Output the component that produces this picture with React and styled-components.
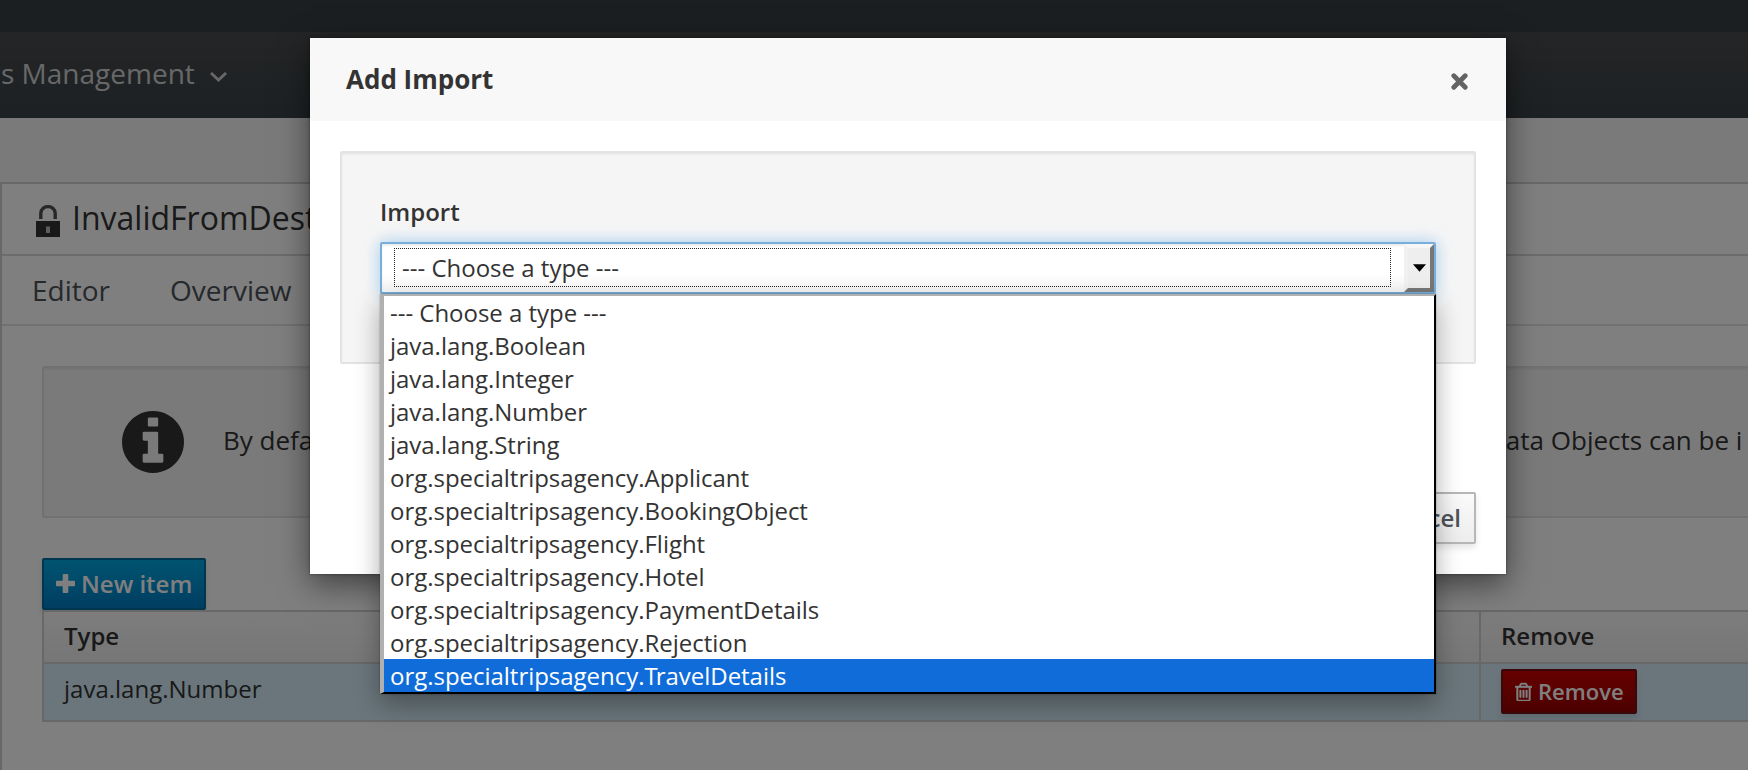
import React from 'react';
import styled, { createGlobalStyle, css } from 'styled-components';

const GlobalStyle = createGlobalStyle`
  *, *::before, *::after { box-sizing: border-box; }
  body {
    margin: 0;
    overflow: hidden;
    font-family: 'Open Sans', sans-serif;
    font-size: 24px;
    line-height: 33px;
    color: #333;
  }
`;

const Page = styled.div`
  position: relative;
  display: flex;
  flex-direction: column;
  width: 1748px;
  height: 770px;
  overflow: hidden;
  background: #f5f5f5;
`;

const TopBar = styled.div`
  flex: none;
  height: 32px;
  background: #363e44;
`;

const NavBar = styled.nav`
  flex: none;
  display: flex;
  align-items: center;
  height: 86px;
  padding-bottom: 3px;
  background: linear-gradient(#494b4d, #394247);
  color: #d1d1d1;
  font-size: 28px;
`;

const NavItem = styled.a`
  display: flex;
  align-items: center;
  gap: 15px;
  margin-left: 1px;
  white-space: nowrap;
  svg { margin-top: 6px; }
`;

const Panel = styled.main`
  flex: 1;
  margin-top: 64px;
  border: solid #d1d1d1;
  border-width: 2px 0 0 2px;
  background: #fff;
`;

const TitleBar = styled.header`
  display: flex;
  align-items: center;
  gap: 12px;
  height: 72px;
  padding: 0 0 3px 34px;
  border-bottom: 2px solid #d8d8d8;
  font-size: 32px;
  white-space: nowrap;
  svg { margin-top: 6px; }
`;

const Tabs = styled.div`
  display: flex;
  align-items: center;
  gap: 60px;
  height: 70px;
  padding-left: 30px;
  border-bottom: 2px solid #e2e2e2;
  color: #4d5258;
  font-size: 28px;
`;

const Content = styled.div`
  display: flex;
  flex-direction: column;
  align-items: flex-start;
  padding: 40px 0 0 40px;
`;

const InfoBox = styled.section`
  display: flex;
  align-items: center;
  width: 1800px;
  height: 152px;
  margin-bottom: 40px;
  padding-left: 78px;
  border: 2px solid #e3e3e3;
  border-radius: 2px;
  background: #f5f5f5;
  box-shadow: inset 0 2px 2px rgba(0, 0, 0, 0.05);
  font-size: 26px;
  white-space: nowrap;
  svg { flex: none; }
`;

const InfoText = styled.p`
  flex: none;
  width: 1240px;
  margin: 0 0 4px 39px;
  ${(p) => p.$tail && css`
    width: auto;
    margin-left: 24px;
  `}
`;

const tones = {
  primary: css`
    height: 52px;
    padding: 0 12px 2px;
    border-color: #006e9c;
    background: linear-gradient(#00a8e1, #007cc3);
    color: #fff;
  `,
  danger: css`
    height: 45px;
    padding: 0 11px 1px 12px;
    border-color: #731010;
    background: linear-gradient(#cc0000, #970000);
    color: #fff;
    font-size: 22px;
  `,
  plain: css`
    height: 52px;
    padding: 0 13px 2px;
    border-color: #b7b7b7;
    background: linear-gradient(#fafafa, #ededed);
    color: #4d5258;
  `,
};

const Button = styled.button`
  display: flex;
  align-items: center;
  gap: 6px;
  border: 2px solid;
  border-radius: 2px;
  box-shadow: 0 4px 6px rgba(3, 3, 3, 0.1);
  font: 600 24px 'Open Sans', sans-serif;
  white-space: nowrap;
  ${(p) => tones[p.$tone]}
`;

const Table = styled.div`
  display: grid;
  grid-template-columns: 1435px 400px;
  border: 2px solid #d1d1d1;
`;

const HeadCell = styled.div`
  display: flex;
  align-items: center;
  height: 52px;
  padding: 0 0 4px 20px;
  border-bottom: 2px solid #d1d1d1;
  background: linear-gradient(#fafafa, #ededed);
  font-weight: 600;
  & + & { border-left: 2px solid #d1d1d1; }
`;

const Cell = styled.div`
  display: flex;
  align-items: center;
  height: 56px;
  padding: 0 0 7px 20px;
  background: #d4ecf8;
  & + & {
    padding-bottom: 1px;
    border-left: 2px solid #d1d1d1;
  }
`;

const Backdrop = styled.div`
  position: absolute;
  inset: 0;
  background: rgba(0, 0, 0, 0.5);
`;

const Dialog = styled.div`
  display: flex;
  flex-direction: column;
  width: 1196px;
  height: 536px;
  margin: 38px 0 0 310px;
  background: #fff;
  box-shadow: 0 10px 30px rgba(0, 0, 0, 0.5), 0 0 3px rgba(0, 0, 0, 0.4);
`;

const DialogHeader = styled.header`
  display: flex;
  align-items: center;
  justify-content: space-between;
  height: 83px;
  padding: 0 38px 0 36px;
  background: #f8f8f8;
  svg { margin-top: 3px; }
`;

const DialogTitle = styled.h1`
  margin: 0;
  font-size: 26px;
  font-weight: 700;
`;

const Well = styled.div`
  height: 213px;
  margin: 30px 30px 0;
  padding: 42px 38px 0;
  border: 2px solid #e3e3e3;
  border-radius: 2px;
  background: #f5f5f5;
  box-shadow: inset 0 2px 2px rgba(0, 0, 0, 0.05);
`;

const Label = styled.label`
  display: block;
  height: 47px;
  font-weight: 600;
`;

const SelectBox = styled.div`
  position: relative;
  display: flex;
  justify-content: space-between;
  height: 52px;
  border: 2px solid #78aedc;
  border-radius: 2px;
  background: linear-gradient(#fff 60%, #f5f5f5);
  box-shadow: inset 0 2px 2px rgba(3, 3, 3, 0.08), 0 0 16px rgba(102, 175, 233, 0.6);
`;

const SelectValue = styled.div`
  width: 997px;
  height: 39px;
  margin: 4px 0 0 12px;
  padding-left: 7px;
  border: 1px dotted #222;
  line-height: 38px;
`;

const SelectArrow = styled.div`
  display: flex;
  align-items: center;
  justify-content: center;
  width: 30px;
  border: 4px solid;
  border-color: #f6f6f6 #777 #777 #f1f1f1;
  background: #eee;
`;

const Options = styled.ul`
  position: absolute;
  top: 50px;
  left: -2px;
  right: -2px;
  margin: 0;
  padding: 0;
  list-style: none;
  border: solid;
  border-width: 2px 2px 2px 4px;
  border-color: #b0b0b0 #000 #000 #b0b0b0;
  background: #fff;
  box-shadow: 0 10px 24px rgba(0, 0, 0, 0.32), 0 0 2px rgba(0, 0, 0, 0.3);
`;

const Option = styled.li`
  height: 33px;
  padding-left: 6px;
  line-height: 34px;
  letter-spacing: -0.025px;
  ${(p) => p.$active && css`
    background: #106cd9;
    color: #fff;
  `}
`;

const Kern = styled.span`
  letter-spacing: -2px;
`;

const DialogFooter = styled.footer`
  display: flex;
  justify-content: flex-end;
  margin-top: 128px;
  padding-right: 30px;
`;

const LockIcon = () => (
  <svg width="24" height="32" viewBox="0 0 24 32">
    <path d="M4.8 14V8.2a7.2 6.6 0 0 1 14.4 0V14" fill="none" stroke="#505050" strokeWidth="3.4" />
    <path d="M0 16h24v16H0z" fill="#333" />
    <path d="M10 21.5h4v6.5h-4z" fill="#bbb" />
  </svg>
);

const ChevronIcon = () => (
  <svg width="17" height="10" viewBox="0 0 17 10">
    <path d="M1 1l7.5 7 7.5-7" fill="none" stroke="#d1d1d1" strokeWidth="2.8" />
  </svg>
);

const CloseIcon = () => (
  <svg width="17" height="17" viewBox="0 0 17 17">
    <path d="M2.8 2.8l11.4 11.4M14.2 2.8L2.8 14.2" stroke="#636363" strokeWidth="4.8" strokeLinecap="round" />
  </svg>
);

const PlusIcon = () => (
  <svg width="19" height="19" viewBox="0 0 19 19">
    <path d="M7.5 0h4a.8.8 0 0 1 .8.8v5.9h5.9a.8.8 0 0 1 .8.8v4a.8.8 0 0 1-.8.8h-5.9v5.9a.8.8 0 0 1-.8.8h-4a.8.8 0 0 1-.8-.8v-5.9H.8a.8.8 0 0 1-.8-.8v-4a.8.8 0 0 1 .8-.8h5.900V.8a.8.8 0 0 1 .8-.8z" fill="#fff" />
  </svg>
);

const InfoIcon = () => (
  <svg width="62" height="62" viewBox="0 128 1536 1536" fill="#333">
    <path d="M1024 1376v-160q0-14-9-23t-23-9h-96v-512q0-14-9-23t-23-9h-320q-14 0-23 9t-9 23v160q0 14 9 23t23 9h96v320h-96q-14 0-23 9t-9 23v160q0 14 9 23t23 9h448q14 0 23-9t9-23zm-128-896v-160q0-14-9-23t-23-9h-192q-14 0-23 9t-9 23v160q0 14 9 23t23 9h192q14 0 23-9t9-23zm640 416q0 209-103 385.5t-279.5 279.5-385.5 103-385.5-103-279.5-279.5-103-385.5 103-385.5 279.5-279.5 385.5-103 385.5 103 279.5 279.5 103 385.5z" />
  </svg>
);

const TrashIcon = () => (
  <svg width="17" height="19" viewBox="0 128 1408 1536" fill="#fff" stroke="#fff" strokeWidth="36">
    <path d="M512 800v576q0 14-9 23t-23 9h-64q-14 0-23-9t-9-23v-576q0-14 9-23t23-9h64q14 0 23 9t9 23zm256 0v576q0 14-9 23t-23 9h-64q-14 0-23-9t-9-23v-576q0-14 9-23t23-9h64q14 0 23 9t9 23zm256 0v576q0 14-9 23t-23 9h-64q-14 0-23-9t-9-23v-576q0-14 9-23t23-9h64q14 0 23 9t9 23zm128 724v-948h-896v948q0 22 7 40.5t14.5 27 10.5 8.5h832q3 0 10.5-8.5t14.5-27 7-40.5zm-672-1076h448l-48-117q-7-9-17-11h-317q-10 2-17 11zm928 32v64q0 14-9 23t-23 9h-96v948q0 83-47 143.5t-113 60.5h-832q-66 0-113-58.5t-47-141.5v-952h-96q-14 0-23-9t-9-23v-64q0-14 9-23t23-9h309l70-167q15-37 54-63t79-26h320q40 0 79 26t54 63l70 167h309q14 0 23 9t9 23z" />
  </svg>
);

const ArrowIcon = () => (
  <svg width="13" height="8" viewBox="0 0 14 8">
    <path d="M0 0h14L7 8z" />
  </svg>
);

const types = [
  '--- Choose a type ---',
  'java.lang.Boolean',
  'java.lang.Integer',
  'java.lang.Number',
  'java.lang.String',
  'org.specialtripsagency.Applicant',
  'org.specialtripsagency.BookingObject',
  'org.specialtripsagency.Flight',
  'org.specialtripsagency.Hotel',
  'org.specialtripsagency.PaymentDetails',
  'org.specialtripsagency.Rejection',
  'org.specialtripsagency.TravelDetails',
];

const kerned = (name) => {
  const at = name.indexOf('Tr');
  return at < 0 ? name : <>{name.slice(0, at)}<Kern>T</Kern>{name.slice(at + 1)}</>;
};

export default function App() {
  const active = types.length - 1;
  return (
    <Page>
      <GlobalStyle />
      <TopBar />
      <NavBar>
        <NavItem>s Management<ChevronIcon /></NavItem>
      </NavBar>
      <Panel>
        <TitleBar><LockIcon />InvalidFromDest</TitleBar>
        <Tabs><span>Editor</span><span>Overview</span></Tabs>
        <Content>
          <InfoBox>
            <InfoIcon />
            <InfoText>By defa</InfoText>
            <InfoText $tail>Data Objects can be i</InfoText>
          </InfoBox>
          <Button $tone="primary"><PlusIcon />New item</Button>
          <Table>
            <HeadCell>Type</HeadCell>
            <HeadCell>Remove</HeadCell>
            <Cell>java.lang.Number</Cell>
            <Cell><Button $tone="danger"><TrashIcon />Remove</Button></Cell>
          </Table>
        </Content>
      </Panel>
      <Backdrop>
        <Dialog role="dialog">
          <DialogHeader>
            <DialogTitle>Add Import</DialogTitle>
            <CloseIcon />
          </DialogHeader>
          <Well>
            <Label>Import</Label>
            <SelectBox>
              <SelectValue>{types[0]}</SelectValue>
              <SelectArrow><ArrowIcon /></SelectArrow>
              <Options>
                {types.map((t, i) => <Option key={t} $active={i === active}>{kerned(t)}</Option>)}
              </Options>
            </SelectBox>
          </Well>
          <DialogFooter><Button $tone="plain">Cancel</Button></DialogFooter>
        </Dialog>
      </Backdrop>
    </Page>
  );
}
